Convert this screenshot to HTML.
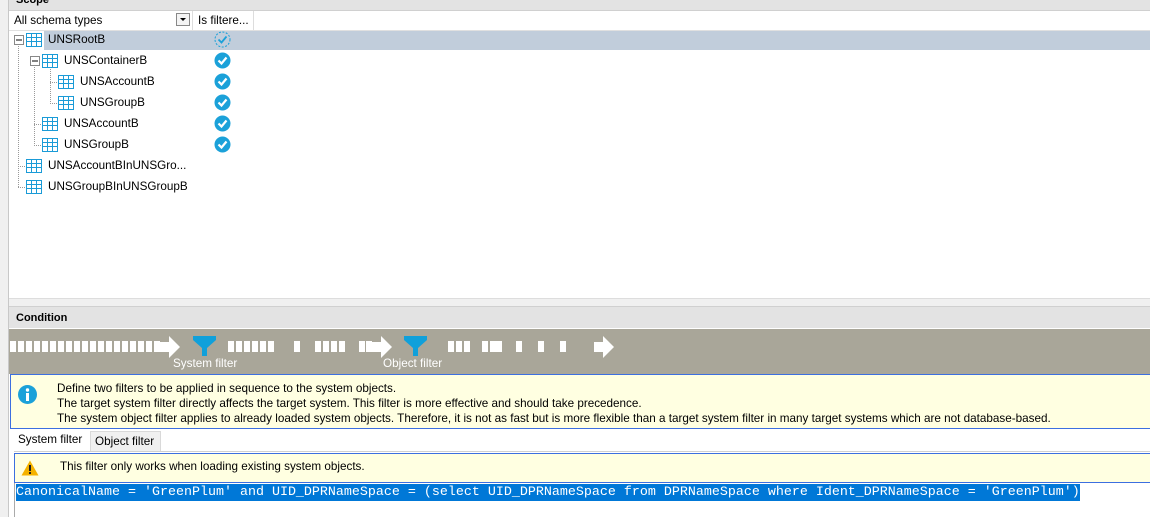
<!DOCTYPE html>
<html><head><meta charset="utf-8"><style>
*{margin:0;padding:0;box-sizing:border-box}
body{width:1150px;height:517px;background:#fff;font-family:"Liberation Sans",sans-serif;font-size:11.7px;color:#000;position:relative;overflow:hidden}
.a{position:absolute}
.t{position:absolute;white-space:nowrap;line-height:14px}
.sq{position:absolute;top:341px;width:6px;height:11px;background:#fff}
.ico{position:absolute;width:16px;height:14px}
.chk{position:absolute;width:17px;height:17px}
</style></head><body>
<div class="a" style="left:0;top:0;width:9px;height:517px;background:#f0f0f0;border-right:1px solid #c8c8c8"></div>
<div class="a" style="left:9px;top:0;width:1141px;height:11px;background:#e3e3e3;border-bottom:1px solid #d0d0d0"></div>
<div class="t" style="left:16px;top:-7px;font-weight:bold;font-size:11px">Scope</div>
<div class="a" style="left:9px;top:30px;width:1141px;height:1px;background:#e0e0e0"></div>
<div class="t" style="left:14px;top:14px">All schema types</div>
<div class="a" style="left:176px;top:13px;width:14px;height:13px;border:1px solid #888;background:#f4f4f4"></div>
<div class="a" style="left:180px;top:18px;border-left:3px solid transparent;border-right:3px solid transparent;border-top:3px solid #000"></div>
<div class="a" style="left:192px;top:11px;width:1px;height:19px;background:#ddd"></div>
<div class="a" style="left:253px;top:11px;width:1px;height:19px;background:#ddd"></div>
<div class="t" style="left:198px;top:14px">Is filtere...</div>
<div class="a" style="left:44px;top:31px;width:1106px;height:19px;background:#c1cddb"></div>
<svg class="a" style="left:0;top:30px" width="260" height="170">
<g stroke="#999" stroke-dasharray="1 1" fill="none">
<line x1="18.5" y1="16" x2="18.5" y2="157"/><line x1="18" y1="136.5" x2="26" y2="136.5"/><line x1="18" y1="157.5" x2="26" y2="157.5"/>
<line x1="34.5" y1="37" x2="34.5" y2="115"/><line x1="34" y1="94.5" x2="42" y2="94.5"/><line x1="34" y1="115.5" x2="42" y2="115.5"/>
<line x1="50.5" y1="35" x2="50.5" y2="73"/><line x1="50" y1="52.5" x2="58" y2="52.5"/><line x1="50" y1="73.5" x2="58" y2="73.5"/>
</g>
<rect x="14.5" y="5.5" width="9" height="9" fill="#fff" stroke="#888"/><line x1="16" y1="10" x2="22" y2="10" stroke="#000"/>
<rect x="30.5" y="26.5" width="9" height="9" fill="#fff" stroke="#888"/><line x1="32" y1="31" x2="38" y2="31" stroke="#000"/>
</svg>
<svg width="0" height="0" style="position:absolute"><defs><g id="tb"><rect x="0.5" y="0.5" width="15" height="13" fill="#fff" stroke="#1a9bd7"/><path d="M0 4.5H16M0 8.5H16M5.5 0V14M10.5 0V14" stroke="#1a9bd7"/></g>
<g id="ck"><circle cx="8.5" cy="8.5" r="8" fill="#1ba1d9"/><path d="M4.5 8.5l3 3 5-6" stroke="#fff" stroke-width="2.2" fill="none"/></g></defs></svg>
<svg class="ico" style="left:26px;top:33px"><use href="#tb"/></svg><div class="t" style="left:48px;top:33px">UNSRootB</div>
<svg class="ico" style="left:42px;top:54px"><use href="#tb"/></svg><div class="t" style="left:64px;top:54px">UNSContainerB</div>
<svg class="ico" style="left:58px;top:75px"><use href="#tb"/></svg><div class="t" style="left:80px;top:75px">UNSAccountB</div>
<svg class="ico" style="left:58px;top:96px"><use href="#tb"/></svg><div class="t" style="left:80px;top:96px">UNSGroupB</div>
<svg class="ico" style="left:42px;top:117px"><use href="#tb"/></svg><div class="t" style="left:64px;top:117px">UNSAccountB</div>
<svg class="ico" style="left:42px;top:138px"><use href="#tb"/></svg><div class="t" style="left:64px;top:138px">UNSGroupB</div>
<svg class="ico" style="left:26px;top:159px"><use href="#tb"/></svg><div class="t" style="left:48px;top:159px">UNSAccountBInUNSGro...</div>
<svg class="ico" style="left:26px;top:180px"><use href="#tb"/></svg><div class="t" style="left:48px;top:180px">UNSGroupBInUNSGroupB</div>
<svg class="chk" style="left:214px;top:31px"><circle cx="8.5" cy="8.5" r="7.5" fill="none" stroke="#1ba1d9" stroke-dasharray="2 1.5"/><path d="M4.5 8.5l3 3 5-6" stroke="#1ba1d9" stroke-width="1.8" fill="none"/></svg>
<svg class="chk" style="left:214px;top:52px"><use href="#ck"/></svg>
<svg class="chk" style="left:214px;top:73px"><use href="#ck"/></svg>
<svg class="chk" style="left:214px;top:94px"><use href="#ck"/></svg>
<svg class="chk" style="left:214px;top:115px"><use href="#ck"/></svg>
<svg class="chk" style="left:214px;top:136px"><use href="#ck"/></svg>
<div class="a" style="left:9px;top:298px;width:1141px;height:8px;background:#f0f0f0;border-top:1px solid #ddd"></div>
<div class="a" style="left:9px;top:306px;width:1141px;height:22px;background:#e3e3e3;border-top:1px solid #d0d0d0"></div>
<div class="t" style="left:16px;top:311px;font-weight:bold;font-size:11px">Condition</div>
<div class="a" style="left:9px;top:328px;width:1141px;height:46px;background:#a9a699;border-top:1px solid #fff"></div>
<div class="sq" style="left:10px"></div><div class="sq" style="left:18px"></div><div class="sq" style="left:26px"></div><div class="sq" style="left:34px"></div><div class="sq" style="left:42px"></div><div class="sq" style="left:50px"></div><div class="sq" style="left:58px"></div><div class="sq" style="left:66px"></div><div class="sq" style="left:74px"></div><div class="sq" style="left:82px"></div><div class="sq" style="left:90px"></div><div class="sq" style="left:98px"></div><div class="sq" style="left:106px"></div><div class="sq" style="left:114px"></div><div class="sq" style="left:122px"></div><div class="sq" style="left:130px"></div><div class="sq" style="left:138px"></div><div class="sq" style="left:146px"></div><div class="sq" style="left:154px"></div>
<div class="sq" style="left:228px"></div><div class="sq" style="left:236px"></div><div class="sq" style="left:244px"></div><div class="sq" style="left:252px"></div><div class="sq" style="left:260px"></div><div class="sq" style="left:268px"></div>
<div class="sq" style="left:294px"></div>
<div class="sq" style="left:315px"></div><div class="sq" style="left:323px"></div><div class="sq" style="left:331px"></div><div class="sq" style="left:339px"></div>
<div class="sq" style="left:359px"></div><div class="sq" style="left:366px"></div>
<div class="sq" style="left:448px"></div><div class="sq" style="left:456px"></div><div class="sq" style="left:464px"></div>
<div class="sq" style="left:482px"></div><div class="sq" style="left:490px"></div><div class="sq" style="left:496px"></div>
<div class="sq" style="left:516px"></div><div class="sq" style="left:538px"></div><div class="sq" style="left:560px"></div>
<svg class="a" style="left:160px;top:335px" width="22" height="24"><path d="M0 7H9V1L20 12L9 23V17H0Z" fill="#fff"/></svg>
<svg class="a" style="left:372px;top:335px" width="22" height="24"><path d="M0 7H9V1L20 12L9 23V17H0Z" fill="#fff"/></svg>
<svg class="a" style="left:594px;top:335px" width="22" height="24"><path d="M0 7H9V1L20 12L9 23V17H0Z" fill="#fff"/></svg>
<svg class="a" style="left:192px;top:335px" width="26" height="22"><path d="M1 1H24V5L15 13V21H10V13L1 5Z" fill="#10a0da"/></svg>
<svg class="a" style="left:403px;top:335px" width="26" height="22"><path d="M1 1H24V5L15 13V21H10V13L1 5Z" fill="#10a0da"/></svg>
<div class="t" style="left:173px;top:357px;color:#fff">System filter</div>
<div class="t" style="left:383px;top:357px;color:#fff">Object filter</div>
<div class="a" style="left:10px;top:374px;width:1140px;height:55px;background:#ffffe1;border:1px solid #3c6fe0;border-right:none"></div>
<svg class="a" style="left:18px;top:385px" width="20" height="20"><circle cx="9.5" cy="9.5" r="9.5" fill="#1ba1d9"/><rect x="8" y="8" width="3" height="8" fill="#fff"/><circle cx="9.5" cy="5" r="1.7" fill="#fff"/></svg>
<div class="t" style="left:57px;top:381px;line-height:15px">Define two filters to be applied in sequence to the system objects.<br>The target system filter directly affects the target system. This filter is more effective and should take precedence.<br>The system object filter applies to already loaded system objects. Therefore, it is not as fast but is more flexible than a target system filter in many target systems which are not database-based.</div>
<div class="a" style="left:10px;top:429px;width:1140px;height:88px;background:#fff"></div>
<div class="t" style="left:18px;top:433px">System filter</div>
<div class="a" style="left:90px;top:431px;width:71px;height:20px;background:#f0f0f0;border:1px solid #d9d9d9;border-bottom:none"></div>
<div class="t" style="left:95px;top:435px">Object filter</div>
<div class="a" style="left:14px;top:451px;width:1136px;height:1px;background:#d0d0d0"></div>
<div class="a" style="left:14px;top:453px;width:1136px;height:30px;background:#ffffe1;border:1px solid #3c6fe0;border-right:none"></div>
<svg class="a" style="left:21px;top:460px" width="18" height="16"><path d="M9 0.5L17.5 15.5H0.5Z" fill="#f5b200"/><rect x="8" y="5" width="2" height="6" fill="#222"/><rect x="8" y="12" width="2" height="2" fill="#222"/></svg>
<div class="t" style="left:60px;top:460px">This filter only works when loading existing system objects.</div>
<div class="a" style="left:14px;top:483px;width:1px;height:34px;background:#aaa"></div>
<div class="t" style="left:16px;top:484px;height:17px;line-height:17px;background:#0078d7;color:#fff;font-family:'Liberation Mono',monospace;font-size:13.33px">CanonicalName = 'GreenPlum' and UID_DPRNameSpace = (select UID_DPRNameSpace from DPRNameSpace where Ident_DPRNameSpace = 'GreenPlum')</div>
</body></html>
